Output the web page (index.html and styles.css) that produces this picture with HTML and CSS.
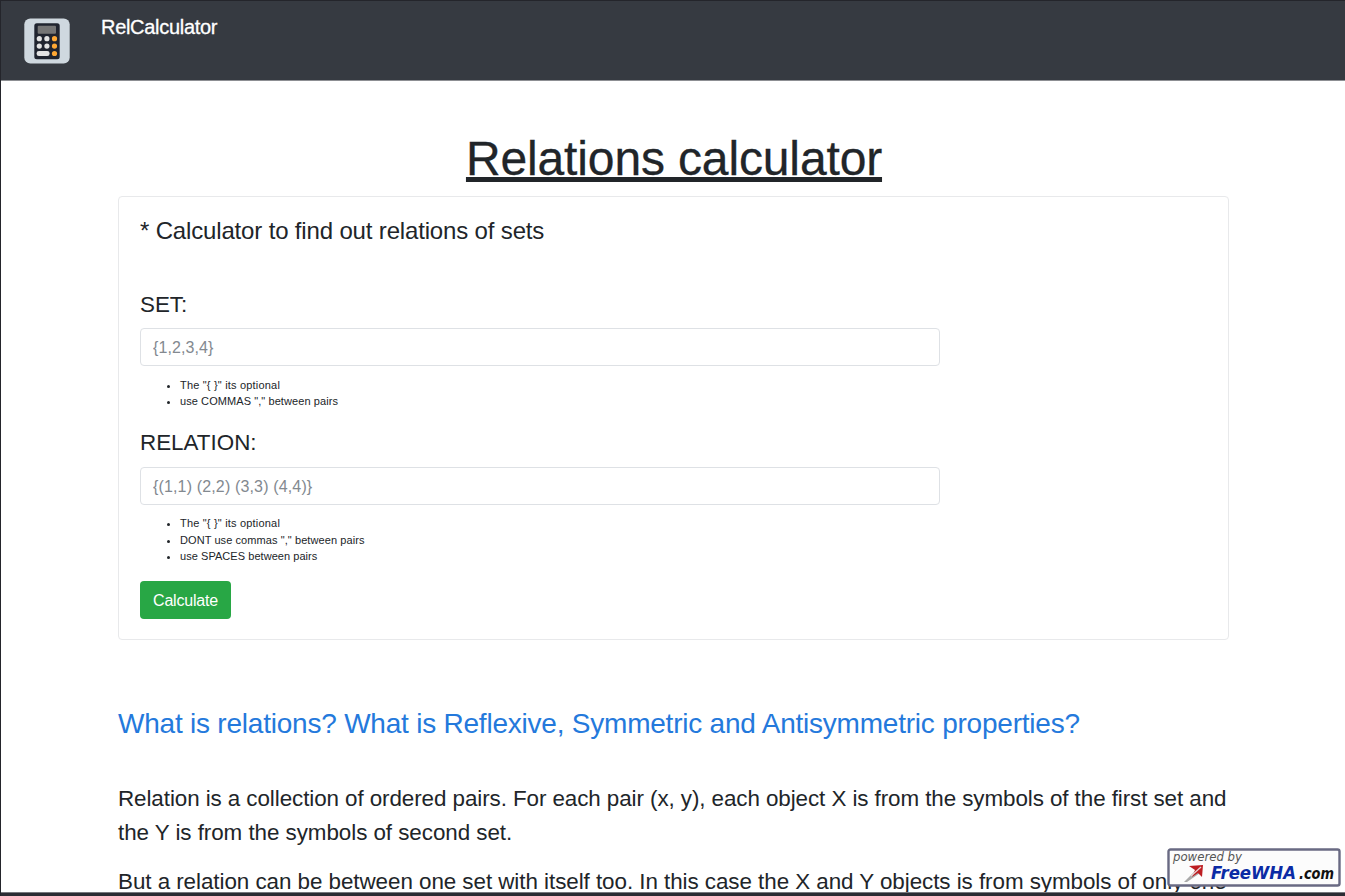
FILE: index.html
```
<!DOCTYPE html>
<html lang="en">
<head>
<meta charset="utf-8">
<title>RelCalculator</title>
<link rel="stylesheet" href="styles.css">
</head>
<body>
<div class="page">
  <header class="navbar">
    <svg class="logo" width="46" height="46" viewBox="0 0 46 46" aria-hidden="true">
      <rect x=".3" y=".4" width="45.4" height="45.2" rx="6" fill="#cfd8df"/>
      <rect x="10.3" y="5.2" width="25.4" height="36" rx="2.5" fill="#20242f"/>
      <rect x="13.7" y="7.8" width="18.3" height="8" rx="1" fill="#757575"/>
      <g fill="#e3e3e3">
        <circle cx="15.3" cy="20.7" r="2.6"/><circle cx="22.9" cy="20.7" r="2.6"/>
        <circle cx="15.3" cy="28.1" r="2.6"/><circle cx="22.9" cy="28.1" r="2.6"/>
        <rect x="12.6" y="33" width="13" height="5" rx="2.3"/>
      </g>
      <g fill="#ffa834">
        <circle cx="30.5" cy="20.7" r="2.6"/><circle cx="30.5" cy="28.1" r="2.6"/><circle cx="30.5" cy="35.5" r="2.6"/>
      </g>
    </svg>
    <span class="brand">RelCalculator</span>
  </header>
  <main class="container">
    <h1 class="title">Relations calculator</h1>
    <section class="card">
      <h4 class="subtitle">* Calculator to find out relations of sets</h4>
      <label class="label" for="set">SET:</label>
      <input class="field field-set" id="set" placeholder="{1,2,3,4}">
      <ul class="hints">
        <li class="hint-a">The "{ }" its optional</li>
        <li class="hint-b">use COMMAS "," between pairs</li>
      </ul>
      <label class="label" for="rel">RELATION:</label>
      <input class="field field-rel" id="rel" placeholder="{(1,1) (2,2) (3,3) (4,4)}">
      <ul class="hints">
        <li class="hint-a">The "{ }" its optional</li>
        <li class="hint-c">DONT use commas "," between pairs</li>
        <li class="hint-d">use SPACES between pairs</li>
      </ul>
      <button class="btn">Calculate</button>
    </section>
    <h2 class="question">What is relations? What is Reflexive, Symmetric and Antisymmetric properties?</h2>
    <p class="text"><span class="line-a">Relation is a collection of ordered pairs. For each pair (x, y), each object X is from the symbols of the first set and</span><br><span class="line-b">the Y is from the symbols of second set.</span></p>
    <p class="text"><span class="line-c">But a relation can be between one set with itself too. In this case the X and Y objects is from symbols of only one</span></p>
  </main>
  <svg class="badge" width="174" height="40" viewBox="0 0 174 40">
    <rect x="1.5" y="1.5" width="171" height="36" rx="2" fill="#fcfcfc" stroke="#696a83" stroke-width="2.4"/>
    <path d="M17 34 L28 23 L33 25 L20 34 Z" fill="#aaa"/>
    <path d="M22 18 L36 17 L35 29 L31 25 L25 29 L28 22 Z" fill="#bd1e22"/>
    <path d="M24 28 L34 19" stroke="#e8d5d5" stroke-width="1.3"/>
    <text class="badge-small" x="6" y="13" textLength="69" lengthAdjust="spacingAndGlyphs">powered by</text>
    <text class="badge-name" x="44" y="30.500" textLength="85" lengthAdjust="spacingAndGlyphs">FreeWHA</text>
    <text class="badge-com" x="132" y="30.500" textLength="35" lengthAdjust="spacingAndGlyphs">.com</text>
  </svg>
</div>
</body>
</html>
```
FILE: styles.css
```
*{box-sizing:border-box}
body{margin:0;background:#fff;color:#212529;font-family:"Liberation Sans",Arial,sans-serif;font-size:16px;line-height:1.5}
.page{position:relative;height:896px;overflow:hidden;border-left:1px solid #24252b}
.page::after{content:"";position:absolute;left:0;right:0;bottom:0;height:3px;background:#2b2c33;border-top:1px solid #77787d}
.navbar{height:80px;background:#363a41;border-top:1px solid #24252b;display:flex;align-items:flex-start;padding:17px 23px;gap:31px;box-shadow:0 1px 0 #8d8f93}
.logo{flex:none}
.brand{color:#fff;font-size:20px;line-height:30px;margin-top:-6px;letter-spacing:-.3px;-webkit-text-stroke:.3px #fff}
.container{width:1111px;margin-left:117px;padding-top:50px}
.title{margin:0 0 8px;text-align:center;font-size:48px;font-weight:400;line-height:58px;letter-spacing:-.14px;text-indent:1px;-webkit-text-stroke:.3px #212529;text-decoration:underline;text-decoration-thickness:5px;text-underline-offset:2px;text-decoration-skip-ink:none}
.card{height:444px;border:1px solid #e8e9eb;border-radius:4px;padding:19px 21px;display:flex;flex-direction:column;align-items:flex-start}
.subtitle{margin:0 0 46px;font-size:24px;font-weight:400;line-height:29px;letter-spacing:-.16px}
.label{font-size:22.4px;line-height:28px}
.field{width:800px;height:38px;margin-top:9px;border:1px solid #dee1e5;border-radius:4px;padding:7px 12px 5px;font:16px/24px "Liberation Sans",Arial,sans-serif;color:#495057;background:#fff}
.field::placeholder{color:#838990;opacity:1}
.field-set{letter-spacing:.1px}
.field-rel{letter-spacing:.15px;margin-top:10px}
.hints{margin:10.500px 0 19.500px;padding-left:40px;font-size:11px;line-height:16.4px}
.hint-a{letter-spacing:.19px}
.hint-b,.hint-c{letter-spacing:.08px}
.hint-d{letter-spacing:.05px}
.btn{width:91px;height:38px;border:0;border-radius:4px;background:#28a745;color:#fff;font:16px/24px "Liberation Sans",Arial,sans-serif;letter-spacing:-.2px;padding:1px 0 0;margin-top:-3px}
.question{margin:67px 0 41px;font-size:28px;font-weight:400;line-height:34px;letter-spacing:-.22px;color:#2479dc;white-space:nowrap}
.text{margin:0 0 16px;font-size:22.4px;line-height:33.6px;white-space:nowrap}
.line-a{letter-spacing:-.077px}
.line-b,.line-c{letter-spacing:-.05px}
.badge{position:absolute;right:4px;bottom:8px}
.badge-small{font:italic 11.5px "DejaVu Sans",sans-serif;fill:#555}
.badge-name{font:italic bold 18px "DejaVu Sans",sans-serif;fill:#0b2ba5}
.badge-com{font:italic bold 16px "DejaVu Sans",sans-serif;fill:#111}
```
